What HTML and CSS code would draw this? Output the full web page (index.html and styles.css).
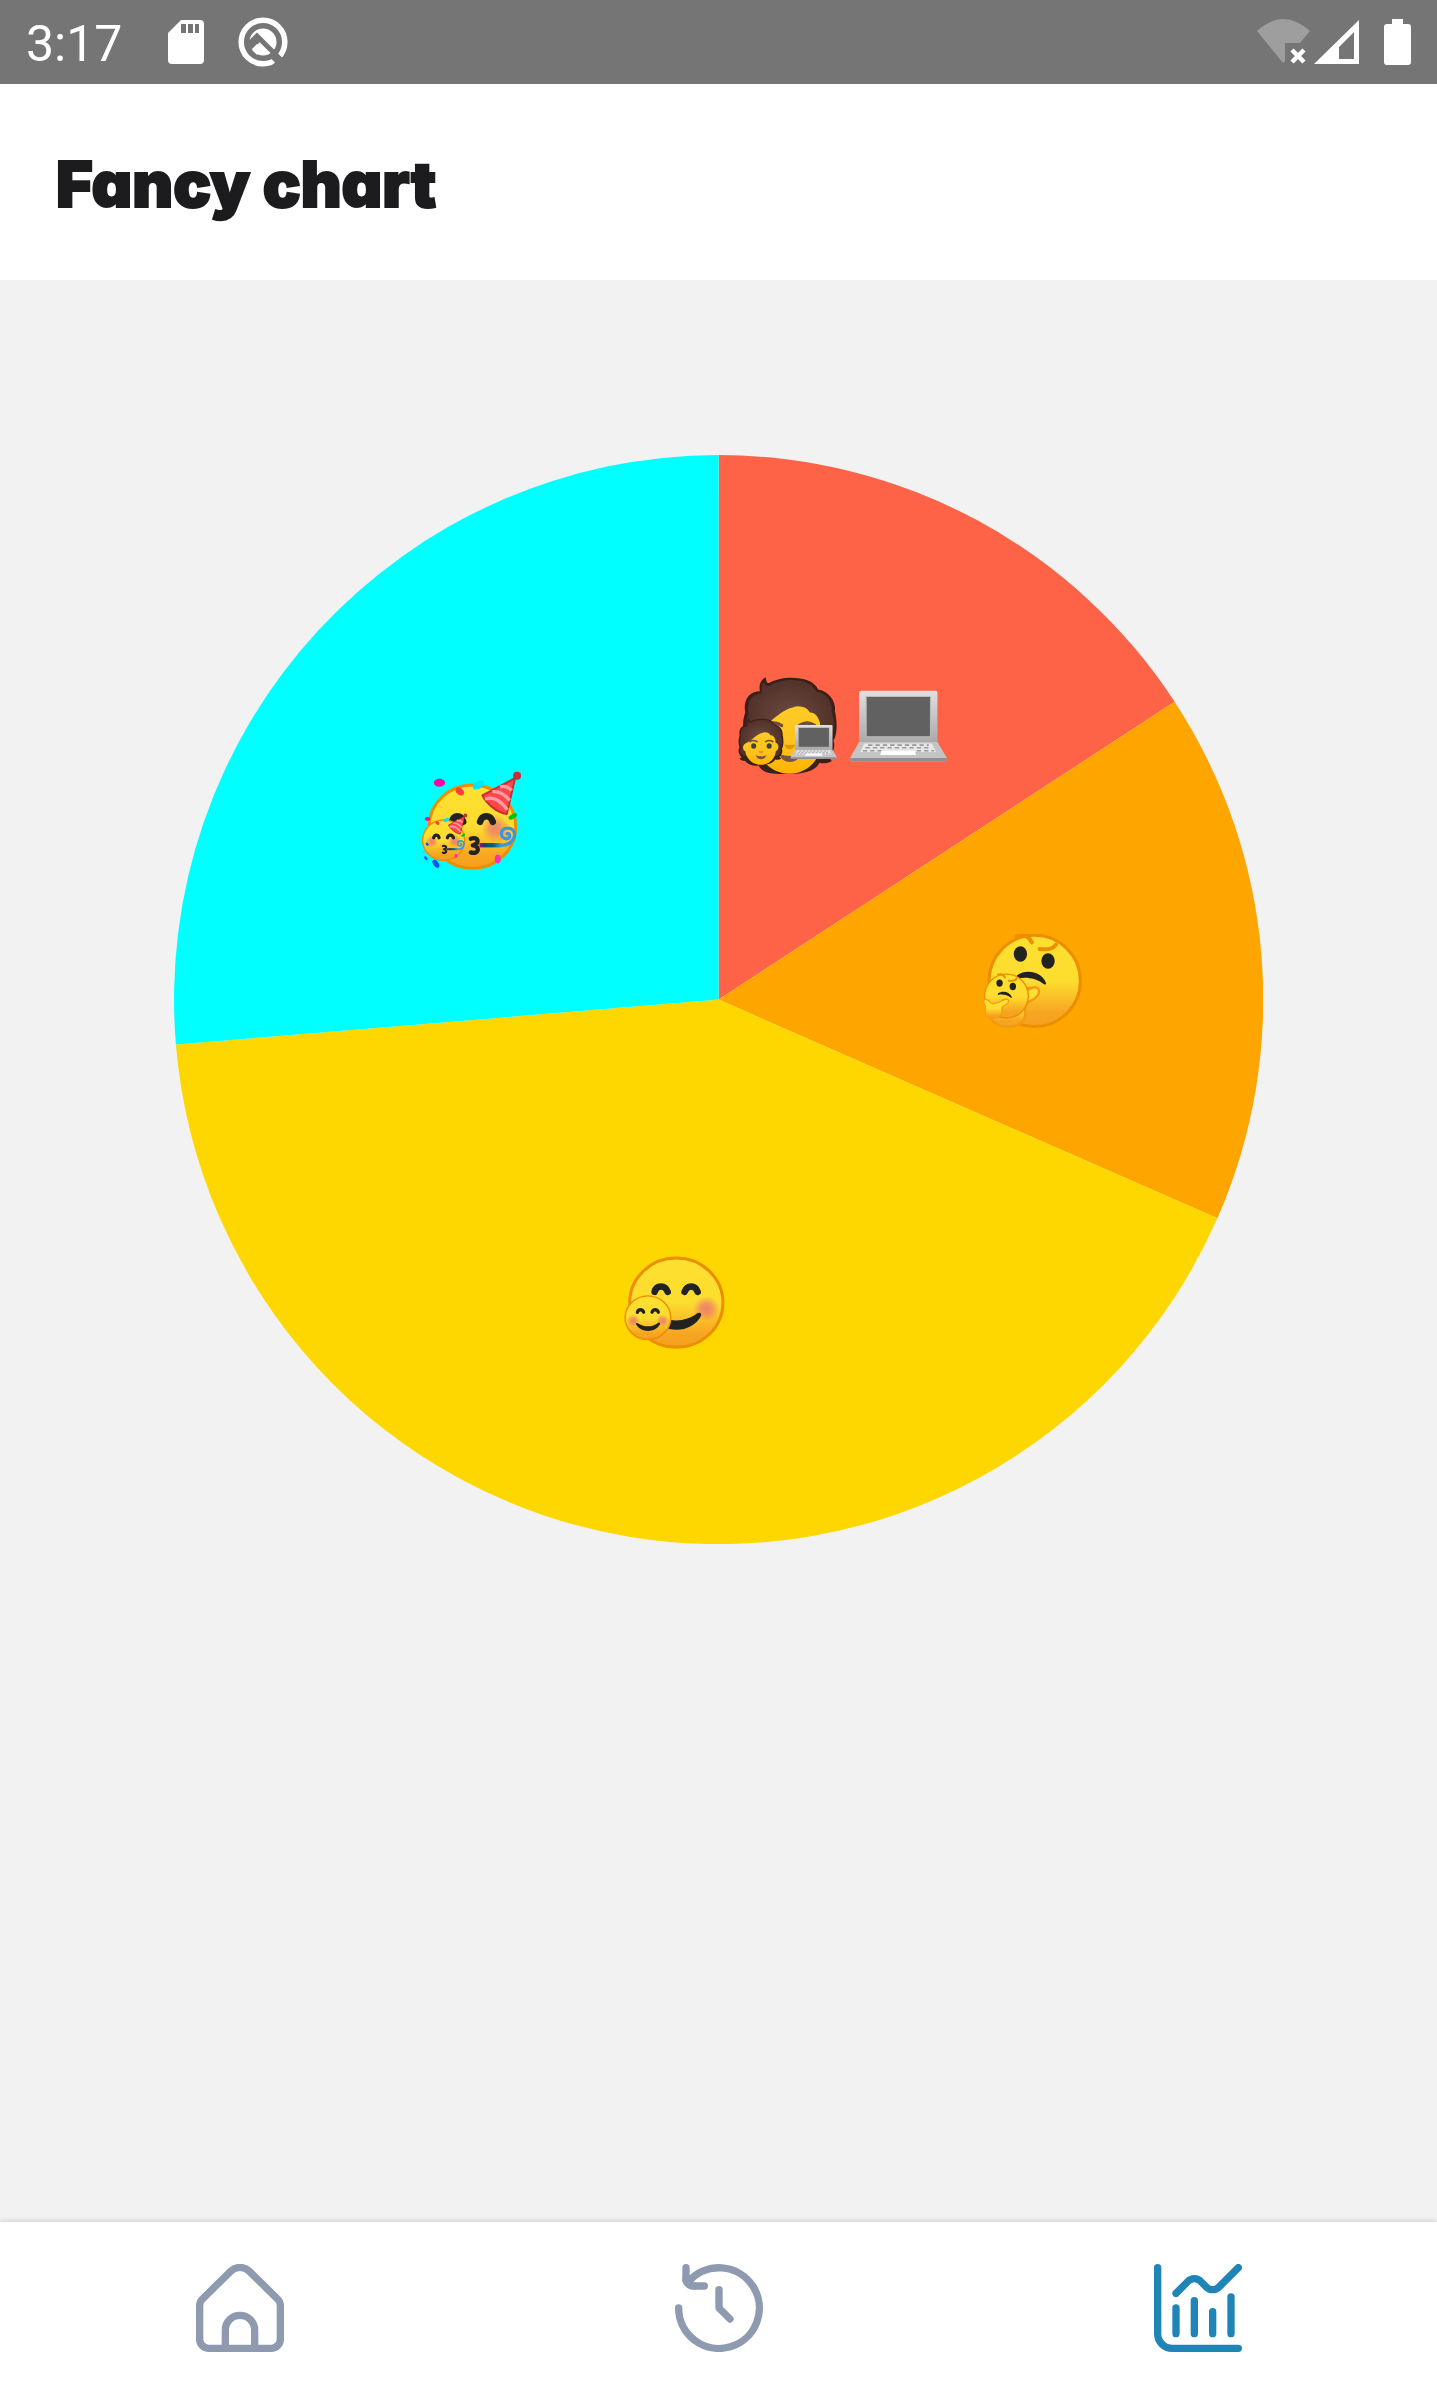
FILE: index.html
```html
<!DOCTYPE html>
<html lang="en">
<head>
<meta charset="utf-8">
<meta name="viewport" content="width=device-width, initial-scale=1">
<title>Fancy chart</title>
<link rel="stylesheet" href="styles.css">
</head>
<body>
<div class="app">
  <div class="status">
    <time class="clock">3:17</time>
    <svg class="sd" viewBox="0 0 36 44" aria-hidden="true"><path fill="#fff" fill-rule="evenodd" d="M13 0H32Q36 0 36 4V40Q36 44 32 44H4Q0 44 0 40V13ZM13 4V13H18V4ZM20 4V13H25V4ZM27 4V13H31V4Z"/></svg>
    <svg class="dev" viewBox="0 0 50 50" aria-hidden="true"><circle cx="25" cy="25" r="21.800" fill="none" stroke="#fff" stroke-width="5.500"/><circle cx="25" cy="25" r="13.500" fill="#fff"/><path d="M9 29 19 19 45 45M14 24 19 19" fill="none" stroke="#757575" stroke-width="5"/><path d="M10 27 19 18 24 23 14 33Z" fill="#757575"/><path d="m14 32 5-5 5 5-5 6Z" fill="#fff"/><path d="m33 38 8 8M42 44l-6 6" stroke="#757575" stroke-width="5"/></svg>
    <span class="spacer"></span>
    <svg class="wifi" viewBox="0 0 53 46" aria-hidden="true"><path fill="#9e9e9e" d="M0 12Q26-12 53 12L43 24H28V42L26 44Z"/><path d="m35 31 12 12m0-12L35 43" stroke="#fff" stroke-width="4.500"/></svg>
    <svg class="signal" viewBox="0 0 45 44" aria-hidden="true"><path fill="#fff" fill-rule="evenodd" d="M45 0V44H0ZM40 12 25 27V39H40Z"/></svg>
    <svg class="battery" viewBox="0 0 27 46" aria-hidden="true"><path fill="#fff" d="M8 0H19V5H24Q27 5 27 8V43Q27 46 24 46H3Q0 46 0 43V8Q0 5 3 5H8Z"/></svg>
  </div>
  <header class="header"><h1>Fancy chart</h1></header>
  <main class="content">
    <svg class="chart" viewBox="0 0 1090 1090" role="img" aria-label="Mood pie chart">
      <defs>
        <linearGradient id="skin" x1="0" y1="0" x2="0" y2="1"><stop offset="0" stop-color="#fde030"/><stop offset=".5" stop-color="#fddd2f"/><stop offset=".85" stop-color="#f7a521"/><stop offset="1" stop-color="#f5a01f"/></linearGradient>
        <linearGradient id="tan" x1="0" y1="0" x2="0" y2="1"><stop offset="0" stop-color="#ffca28"/><stop offset=".6" stop-color="#fec31a"/><stop offset="1" stop-color="#ffb300"/></linearGradient>
        <radialGradient id="hair"><stop offset="0" stop-color="#6d4c41"/><stop offset="1" stop-color="#513129"/></radialGradient>
        <radialGradient id="blush"><stop offset="0" stop-color="#ed7770" stop-opacity=".85"/><stop offset=".4" stop-color="#ed7770" stop-opacity=".7"/><stop offset="1" stop-color="#ed7770" stop-opacity="0"/></radialGradient>
        <linearGradient id="metal" x1="0" y1="0" x2="0" y2="1"><stop offset="0" stop-color="#e0e0e0"/><stop offset="1" stop-color="#a8a8a8"/></linearGradient>
        <linearGradient id="horn"><stop offset="0" stop-color="#b0009c"/><stop offset=".25" stop-color="#004a68"/><stop offset=".6" stop-color="#006080"/><stop offset="1" stop-color="#4294ee"/></linearGradient>
        <g id="laptop">
          <rect x="419" y="93" width="235" height="158" rx="7" fill="url(#metal)"/>
          <rect x="440" y="110" width="193" height="121" fill="#616161" stroke="#bdbdbd" stroke-width="3"/>
          <path d="M419 247H654L682 294V301Q682 305 676 305H398Q392 305 392 300V294Z" fill="#c4c4c4"/>
          <path d="M392 295H682V301Q682 305 676 305H398Q392 305 392 300Z" fill="#8f8f8f"/>
          <path d="M434 251H637L650 277H422Z" fill="#e8e8e8"/>
          <path d="M446 256H628M438 264H636M430 273H486M592 273H644" stroke="#999" stroke-width="5" stroke-dasharray="13 9"/>
          <path d="M486 274H586L590 286H482Z" fill="#fff"/>
        </g>
        <g id="person">
          <path d="M121 94C117 73 124 59 139 52C139 65 143 72 150 69C182 47 278 44 296 89C333 96 350 130 346 153C354 187 353 225 342 242C349 263 338 282 326 291L337 304C324 313 306 311 300 309C285 338 246 342 210 342C169 343 130 344 117 317C100 321 82 312 76 302L90 297C72 276 64 255 76 234C68 203 69 181 77 158C70 122 87 94 121 94Z" fill="#3b1f19"/>
          <path d="M127 101C124 78 129 72 133 68C138 81 149 80 158 74C191 54 272 52 290 95C325 101 340 130 336 154C348 190 344 218 333 240C341 264 325 281 309 287H100C82 268 73 251 85 235C77 208 78 182 87 160C80 130 94 101 127 101Z" fill="url(#hair)"/>
          <path d="M113 209C160 190 176 148 235 139Q261 139 271 158C291 155 303 183 303 205C326 204 325 255 304 255C300 306 258 342 210 342C164 342 119 309 113 257C93 250 94 220 113 209Z" fill="url(#tan)"/>
          <ellipse cx="165" cy="224" rx="16" ry="17" fill="#404040"/><ellipse cx="262" cy="224" rx="16" ry="17" fill="#404040"/>
          <path d="M142 197Q163 182 186 197M240 197Q263 182 285 197" fill="none" stroke="#6d4c41" stroke-width="10" stroke-linecap="round"/>
          <path d="M194 255H228Q220 269 210 269Q200 269 194 255Z" fill="#e59600"/>
          <path d="M178 282Q212 296 245 282Q235 307 211 307Q187 307 178 282Z" fill="#795548"/>
        </g>
        <g id="thinking">
          <circle cx="196" cy="184" r="137" fill="url(#skin)" stroke="#eb8f00" stroke-width="9"/>
          <ellipse cx="153" cy="103" rx="20" ry="23" fill="#222"/><ellipse cx="236" cy="124" rx="20" ry="23" fill="#222"/>
          <path d="M142 50Q177 42 187 68M211 88Q247 93 260 75" fill="none" stroke="#eb8f00" stroke-width="12" stroke-linecap="round"/>
          <path d="M143 167C170 148 216 155 230 190Q231 196 224 194C200 175 169 171 145 177Q138 176 143 167Z" fill="#222"/>
          <path d="M166 210C182 198 204 208 202 222C200 238 185 238 177 238" fill="#fbc12b" stroke="#f29a13" stroke-width="7"/>
          <path d="M68 204C52 200 50 222 60 238C72 257 58 277 64 294C76 329 148 332 164 298C174 280 160 262 171 252C184 242 202 238 208 222C213 208 202 199 188 205C164 215 143 229 113 233C97 235 92 212 68 204Z" fill="url(#skin)" stroke="#f29a13" stroke-width="7" stroke-linejoin="round"/>
        </g>
        <g id="smile">
          <ellipse cx="200" cy="190" rx="140" ry="134" fill="url(#skin)" stroke="#eb8f00" stroke-width="9"/>
          <ellipse cx="110" cy="208" rx="40" ry="38" fill="url(#blush)"/><ellipse cx="290" cy="208" rx="40" ry="38" fill="url(#blush)"/>
          <path d="M135 157C140 136 167 136 174 157M225 157C232 136 257 136 264 157" fill="none" stroke="#222" stroke-width="20" stroke-linecap="round"/>
          <path d="M138 224C174 250 228 250 264 221Q277 217 274 230C246 285 156 285 127 230Q126 218 138 224Z" fill="#222"/>
        </g>
        <g id="party">
          <ellipse cx="203" cy="201" rx="130" ry="125" fill="url(#skin)" stroke="#eb8f00" stroke-width="9"/>
          <circle cx="272" cy="206" r="42" fill="url(#blush)"/><circle cx="130" cy="210" r="38" fill="url(#blush)"/>
          <path d="M141 186C147 164 169 164 175 186M226 186C232 164 257 164 264 186" fill="none" stroke="#222" stroke-width="20" stroke-linecap="round"/>
          <path d="M198 237C221 229 227 252 204 257C227 259 223 286 198 278" fill="none" stroke="#222" stroke-width="13" stroke-linecap="round" stroke-linejoin="round"/>
          <path d="M224 250H290V263H224Z" fill="url(#horn)"/>
          <path d="M288 257C335 259 342 205 309 205C284 205 284 238 306 237C319 235 316 218 307 222" fill="none" stroke="#4294dc" stroke-width="10" stroke-linecap="round"/>
          <path d="M233 107 331 55 306 163C277 158 245 133 233 107Z" fill="#ff4848" stroke="#c62f36" stroke-width="6" stroke-linejoin="round"/>
          <path d="M241 118Q275 105 308 150M263 96Q290 93 315 122M286 82Q304 75 321 92" fill="none" stroke="#ff9ba6" stroke-width="10"/>
          <circle cx="337" cy="48" r="12" fill="#c62f36"/>
          <ellipse cx="104" cy="69" rx="17" ry="12" fill="#ff00a2"/><ellipse cx="165" cy="95" rx="14" ry="10" transform="rotate(40 165 95)" fill="#ff3d3d"/>
          <ellipse cx="221" cy="76" rx="19" ry="11" transform="rotate(-30 221 76)" fill="#00e5ff"/><ellipse cx="324" cy="170" rx="14" ry="7" transform="rotate(-30 324 170)" fill="#00c000"/>
          <ellipse cx="279" cy="298" rx="9" ry="13" fill="#ff2fb3"/><ellipse cx="93" cy="312" rx="8" ry="14" transform="rotate(-35 93 312)" fill="#0057ff"/><ellipse cx="101" cy="226" rx="7" ry="12" transform="rotate(-35 101 226)" fill="#0057ff"/><ellipse cx="85" cy="272" rx="12" ry="8" fill="#4fc9e0"/>
        </g>
      </defs>
      <path fill="#ff6347" d="M545 545V0A545 545 0 0 1 1001.300 246.900Z"/>
      <path fill="#ffa500" d="M545 545 1001.300 246.900A545 545 0 0 1 1044.100 763.900Z"/>
      <path fill="#ffd700" d="M545 545 1044.100 763.900A545 545 0 0 1 1.900 590Z"/>
      <path fill="#0ff" d="M545 545 1.900 590A545 545 0 0 1 545 0Z"/>
      <g transform="translate(546 205) scale(.3333)"><use href="#person"/><use href="#person" transform="translate(23 151) scale(.48)"/><use href="#laptop" transform="translate(25 151) scale(.48)"/><use href="#laptop"/></g>
      <g transform="translate(796 465) scale(.3333)"><use href="#thinking"/><use href="#thinking" transform="translate(17 141) scale(.48)"/></g>
      <g transform="translate(436 785) scale(.3333)"><use href="#smile"/><use href="#smile" transform="translate(17 142) scale(.489)"/></g>
      <g transform="translate(231 305) scale(.3333)"><use href="#party"/><use href="#party" transform="translate(18 144) scale(.485)"/></g>
    </svg>
  </main>
  <nav class="tabs" aria-label="Main">
    <a class="tab" href="#home" aria-label="Home"><svg viewBox="0 0 24 24"><path d="M1 11.300V20.500A2.500 2.500 0 0 0 3.500 23H20.500A2.500 2.500 0 0 0 23 20.500V11.300A2.500 2.500 0 0 0 22.200 9.500L14.500 1.950A3.600 3.600 0 0 0 9.500 1.950L1.800 9.500A2.500 2.500 0 0 0 1 11.300ZM8 23V18A4 4 0 0 1 16 18V23"/></svg></a>
    <a class="tab" href="#history" aria-label="History"><svg viewBox="0 0 24 24"><path d="M1 12A11 11 0 1 0 3.700 4.800M3 1V4.500A2.500 2.500 0 0 0 5.500 6H8M12 7V12L15 15"/><path d="M3 4A2 2 0 0 0 5 6"/></svg></a>
    <a class="tab active" href="#chart" aria-label="Chart" aria-current="page"><svg viewBox="0 0 24 24"><path d="M1 1V19A4 4 0 0 0 5 23H23M6 12V19M11 10V19M16 13V19M21 9V19M6 8 9.300 4.700A2.400 2.400 0 0 1 12.700 4.700L14.300 6.300A2.400 2.400 0 0 0 17.700 6.300L23 1"/></svg></a>
  </nav>
</div>
</body>
</html>
```
FILE: styles.css
```css
* { box-sizing: border-box; }
body { margin: 0; background: #f2f2f2; font-family: Inter, "Liberation Sans", sans-serif; }
svg { display: block; flex: none; }
.app { min-height: 100vh; display: flex; flex-direction: column; }
.status { height: 84px; padding: 0 26px; display: flex; align-items: center; background: #757575; color: #fff; }
.clock { width: 142px; padding-top: 4px; font: 400 50px/60px Roboto, sans-serif; }
.sd { width: 36px; height: 44px; margin-right: 34px; }
.dev { width: 50px; height: 50px; }
.spacer { flex: 1; }
.wifi { width: 53px; height: 46px; margin-right: 4px; }
.signal { width: 45px; height: 44px; margin-right: 25px; }
.battery { width: 27px; height: 46px; }
.header { height: 196px; padding: 4px 56px 0; display: flex; align-items: center; background: #fff; }
h1 { margin: 0; font-size: 63px; line-height: 80px; font-weight: 900; font-feature-settings: "cv11"; color: #1c1c1e; -webkit-text-stroke: 2px #1c1c1e; }
.content { flex: 1; padding: 175px 0; display: flex; justify-content: center; align-items: flex-start; }
.chart { width: 75.8%; }
.tabs { height: 163px; display: flex; align-items: center; padding-top: 8px; background: #fff; box-shadow: 0 -1px 5px rgba(0, 0, 0, .14); }
.tab { flex: 1; display: flex; justify-content: center; color: #8e9ab0; }
.tab svg { width: 88px; height: 88px; fill: none; stroke: currentColor; stroke-width: 2; stroke-linecap: round; stroke-linejoin: round; }
.tab.active { color: #1f85b7; }
```
